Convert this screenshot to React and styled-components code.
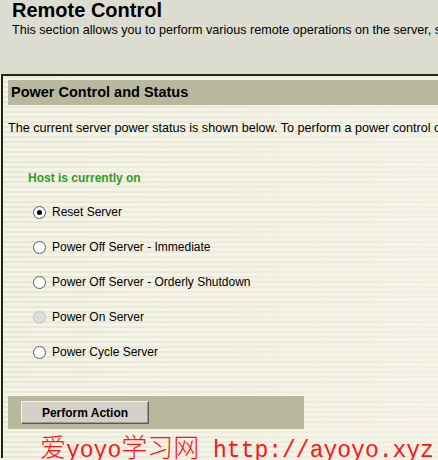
import React from 'react'
import styled, { createGlobalStyle } from 'styled-components'

const GlobalStyle = createGlobalStyle`
body {
  margin: 0;
  font-family: 'Liberation Sans', Arial, sans-serif;
  background: #f3f2e5;
  overflow: hidden;
}
`

const options = [
  { label: 'Reset Server', checked: true },
  { label: 'Power Off Server - Immediate' },
  { label: 'Power Off Server - Orderly Shutdown' },
  { label: 'Power On Server', disabled: true },
  { label: 'Power Cycle Server' },
]

const App = () => {
  return (
    <Page>
      <GlobalStyle />
      <Header>
        <Strip />
        <HeaderText>
          <Title>Remote Control</Title>
          <Intro>This section allows you to perform various remote operations on the server, such as</Intro>
        </HeaderText>
      </Header>
      <Panel>
        <SectionBar>Power Control and Status</SectionBar>
        <Lead>The current server power status is shown below. To perform a power control operation</Lead>
        <Status>Host is currently on</Status>
        <Options>
          {options.map((o) => (
            <Option key={o.label}>
              <Radio checked={o.checked} disabled={o.disabled} />
              {o.label}
            </Option>
          ))}
        </Options>
        <ActionBar>
          <Button>Perform Action</Button>
        </ActionBar>
        <Watermark><Han>爱</Han>yoyo<Han>学习网</Han> http://ayoyo.xyz</Watermark>
      </Panel>
    </Page>
  )
}

const Page = styled.div`
width: 438px;
height: 460px;
overflow: hidden;
`

const Header = styled.div`
display: flex;
height: 74px;
background: #dddcd0;
`

const Strip = styled.div`
width: 3px;
height: 68px;
background: linear-gradient(to bottom, #9a8482 0, #8e7c7a 85%, #4a3e3c 100%);
`

const HeaderText = styled.div`
padding-left: 12px;
white-space: nowrap;
`

const Title = styled.h1`
margin: 0;
font-size: 20px;
line-height: 21px;
font-weight: 700;
color: #000;
`

const Intro = styled.p`
margin: 2px 0 0;
font-size: 12.6px;
line-height: 14px;
color: #000;
`

const Panel = styled.div`
position: relative;
height: 384px;
border-top: 2px solid #1c2a14;
border-left: 2px solid #1c2a14;
margin-left: 1px;
padding: 4px 0 0 5px;
box-sizing: border-box;
background:
  linear-gradient(to right, rgba(244, 243, 231, 0) 0, rgba(244, 243, 231, 0.55) 100%),
  repeating-linear-gradient(to bottom, #e9e8d7 0 2px, #f4f3e7 2px 5px);
white-space: nowrap;
`

const SectionBar = styled.div`
height: 25px;
line-height: 25px;
padding-left: 3px;
background: #b8b89f;
font-size: 14.5px;
font-weight: 700;
color: #000;
`

const Lead = styled.p`
margin: 0;
padding-top: 16px;
font-size: 12.6px;
line-height: 14px;
color: #000;
`

const Status = styled.p`
margin: 0;
padding: 36px 0 0 20px;
font-size: 12px;
line-height: 14px;
font-weight: 700;
color: #2f9f25;
`

const Options = styled.div`
display: flex;
flex-direction: column;
gap: 21px;
padding: 20px 0 0 25px;
`

const Option = styled.label`
display: flex;
align-items: center;
gap: 6px;
height: 14px;
font-size: 12px;
color: #000;
`

const Radio = styled.span`
position: relative;
width: 11px;
height: 11px;
border-radius: 50%;
border: 1px solid ${(p) => (p.disabled ? '#c4c4c0' : '#5e5e5e')};
background: ${(p) => (p.disabled ? '#dcdcd8' : 'radial-gradient(circle at 40% 35%, #ffffff 0, #ffffff 55%, #e6e6e2 100%)')};
flex: none;
&::after {
  content: '';
  display: ${(p) => (p.checked ? 'block' : 'none')};
  position: absolute;
  left: 3px;
  top: 3px;
  width: 5px;
  height: 5px;
  border-radius: 50%;
  background: #000;
}
`

const ActionBar = styled.div`
display: flex;
align-items: center;
width: 296px;
height: 33px;
margin-top: 37px;
padding-left: 13px;
box-sizing: border-box;
background: #b8b89f;
`

const Button = styled.button`
width: 128px;
height: 23px;
padding: 0;
background: #d5d1c9;
border: 1px solid;
border-color: #f4f2ee #5a5a58 #5a5a58 #f4f2ee;
box-shadow: inset -1px -1px 0 #9a9892;
font-family: 'Liberation Sans', Arial, sans-serif;
font-size: 12px;
font-weight: 700;
color: #000;
`

const Watermark = styled.div`
position: absolute;
left: 37px;
top: 360px;
font-family: 'Liberation Mono', 'Noto Sans CJK SC', monospace;
font-size: 23px;
line-height: 30px;
color: #ff1414;
white-space: nowrap;
pointer-events: none;
`

const Han = styled.span`
font-family: 'Noto Sans CJK SC', sans-serif;
font-size: 26px;
font-weight: 300;
line-height: 0;
`

export default App
